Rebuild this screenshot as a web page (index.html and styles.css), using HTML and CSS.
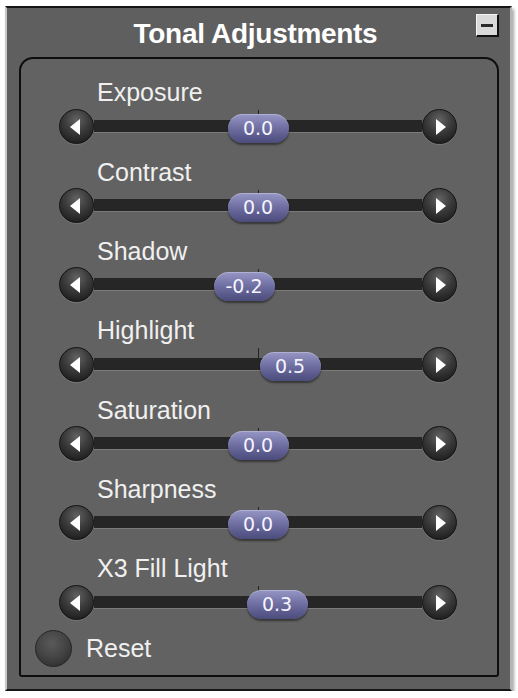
FILE: index.html
```html
<!DOCTYPE html>
<html>
<head>
<meta charset="utf-8">
<link rel="stylesheet" href="styles.css">
</head>
<body>
<div class="panel">
  <div class="titlebar">
    <div class="spacer"></div>
    <h1 class="title">Tonal Adjustments</h1>
    <button class="minimize" aria-label="Collapse"><span class="minus"></span></button>
  </div>
  <div class="inner">
    <div class="row">
      <div class="label">Exposure</div>
      <div class="slider">
        <span class="arrow-btn"><svg viewBox="0 0 35 35" width="35" height="35"><polygon points="11,18 21,10 21,26" fill="#fff"/></svg></span>
        <div class="track-wrap"><div class="track"></div><div class="tick"></div><div class="thumb" style="left:133.5px">0.0</div></div>
        <span class="arrow-btn"><svg viewBox="0 0 35 35" width="35" height="35"><polygon points="14,10 24,18 14,26" fill="#fff"/></svg></span>
      </div>
    </div>
    <div class="row">
      <div class="label">Contrast</div>
      <div class="slider">
        <span class="arrow-btn"><svg viewBox="0 0 35 35" width="35" height="35"><polygon points="11,18 21,10 21,26" fill="#fff"/></svg></span>
        <div class="track-wrap"><div class="track"></div><div class="tick"></div><div class="thumb" style="left:133.5px">0.0</div></div>
        <span class="arrow-btn"><svg viewBox="0 0 35 35" width="35" height="35"><polygon points="14,10 24,18 14,26" fill="#fff"/></svg></span>
      </div>
    </div>
    <div class="row">
      <div class="label">Shadow</div>
      <div class="slider">
        <span class="arrow-btn"><svg viewBox="0 0 35 35" width="35" height="35"><polygon points="11,18 21,10 21,26" fill="#fff"/></svg></span>
        <div class="track-wrap"><div class="track"></div><div class="tick"></div><div class="thumb" style="left:119.5px">-0.2</div></div>
        <span class="arrow-btn"><svg viewBox="0 0 35 35" width="35" height="35"><polygon points="14,10 24,18 14,26" fill="#fff"/></svg></span>
      </div>
    </div>
    <div class="row">
      <div class="label">Highlight</div>
      <div class="slider">
        <span class="arrow-btn"><svg viewBox="0 0 35 35" width="35" height="35"><polygon points="11,18 21,10 21,26" fill="#fff"/></svg></span>
        <div class="track-wrap"><div class="track"></div><div class="tick"></div><div class="thumb" style="left:165.5px">0.5</div></div>
        <span class="arrow-btn"><svg viewBox="0 0 35 35" width="35" height="35"><polygon points="14,10 24,18 14,26" fill="#fff"/></svg></span>
      </div>
    </div>
    <div class="row">
      <div class="label">Saturation</div>
      <div class="slider">
        <span class="arrow-btn"><svg viewBox="0 0 35 35" width="35" height="35"><polygon points="11,18 21,10 21,26" fill="#fff"/></svg></span>
        <div class="track-wrap"><div class="track"></div><div class="tick"></div><div class="thumb" style="left:133.5px">0.0</div></div>
        <span class="arrow-btn"><svg viewBox="0 0 35 35" width="35" height="35"><polygon points="14,10 24,18 14,26" fill="#fff"/></svg></span>
      </div>
    </div>
    <div class="row">
      <div class="label">Sharpness</div>
      <div class="slider">
        <span class="arrow-btn"><svg viewBox="0 0 35 35" width="35" height="35"><polygon points="11,18 21,10 21,26" fill="#fff"/></svg></span>
        <div class="track-wrap"><div class="track"></div><div class="tick"></div><div class="thumb" style="left:133.5px">0.0</div></div>
        <span class="arrow-btn"><svg viewBox="0 0 35 35" width="35" height="35"><polygon points="14,10 24,18 14,26" fill="#fff"/></svg></span>
      </div>
    </div>
    <div class="row">
      <div class="label">X3 Fill Light</div>
      <div class="slider">
        <span class="arrow-btn"><svg viewBox="0 0 35 35" width="35" height="35"><polygon points="11,18 21,10 21,26" fill="#fff"/></svg></span>
        <div class="track-wrap"><div class="track"></div><div class="tick"></div><div class="thumb" style="left:152.5px">0.3</div></div>
        <span class="arrow-btn"><svg viewBox="0 0 35 35" width="35" height="35"><polygon points="14,10 24,18 14,26" fill="#fff"/></svg></span>
      </div>
    </div>
    <div class="reset">
      <span class="reset-btn"></span>
      <span class="reset-label">Reset</span>
    </div>
  </div>
</div>
</body>
</html>
```

FILE: styles.css
```css
html, body {
  margin: 0;
  padding: 0;
  background: #ffffff;
}

body {
  font-family: "Liberation Sans", Arial, sans-serif;
}

.panel {
  box-sizing: border-box;
  width: 507px;
  height: 685px;
  margin: 6px 0 0 5px;
  padding: 0 11px 12px 12px;
  background: #5f5f5f;
  border-top: 2px solid #161616;
  border-left: 2px solid #c8c8c8;
  border-right: 2px solid #b4b4b4;
  border-bottom: 2px solid #161616;
  box-shadow: 2px 3px 3px rgba(0, 0, 0, 0.35);
  display: flex;
  flex-direction: column;
}

.titlebar {
  box-sizing: border-box;
  height: 49px;
  padding-top: 6px;
  display: grid;
  grid-template-columns: 1fr auto 1fr;
  align-items: start;
  flex: none;
}

.title {
  margin: 4px 7px 0 0;
  font-size: 28px;
  line-height: 32px;
  font-weight: bold;
  letter-spacing: -0.3px;
  color: #ffffff;
  white-space: nowrap;
}

.minimize {
  justify-self: end;
  box-sizing: border-box;
  width: 23px;
  height: 23px;
  padding: 0;
  background: #d9d9d9;
  border-top: 1px solid #f4f4f4;
  border-left: 1px solid #f4f4f4;
  border-right: 2px solid #111;
  border-bottom: 2px solid #111;
  display: flex;
  align-items: center;
  justify-content: center;
}

.minus {
  display: block;
  width: 12px;
  height: 3px;
  background: #2a2a2a;
}

.inner {
  box-sizing: border-box;
  height: 620px;
  flex: none;
  background: #626262;
  border: 2px solid #0e0e0e;
  border-radius: 14px 14px 3px 3px;
  padding-top: 19.3px;
  display: flex;
  flex-direction: column;
}

.row + .row {
  margin-top: 13.33px;
}

.label {
  padding-left: 76px;
  font-size: 25px;
  line-height: 28px;
  color: #f0f0f0;
}

.slider {
  margin: 2px 40px 0 38px;
  height: 36px;
  display: flex;
  align-items: center;
}

.arrow-btn {
  flex: none;
  box-sizing: border-box;
  width: 35px;
  height: 35px;
  border-radius: 50%;
  background: radial-gradient(circle at 50% 30%, #626262 0%, #3c3c3c 42%, #222 78%, #121212 100%);
  border: 1px solid #141414;
  box-shadow: 0 1px 1px rgba(255, 255, 255, 0.12);
  display: flex;
}

.arrow-btn svg {
  display: block;
  margin: -1px;
}

.track-wrap {
  flex: 1;
  height: 36px;
  position: relative;
  display: flex;
  align-items: center;
}

.track {
  width: 100%;
  height: 12px;
  background: #262626;
  border-bottom: 1px solid #7a7a7a;
}

.tick {
  position: absolute;
  left: 164px;
  top: 2px;
  width: 1px;
  height: 10px;
  background: #222;
}

.thumb {
  position: absolute;
  top: 5.5px;
  width: 61px;
  height: 29px;
  box-sizing: border-box;
  border-radius: 14.5px;
  background: linear-gradient(#9797c6 0%, #7575a8 40%, #5b5b8e 75%, #4c4c7c 100%);
  box-shadow: 0 2px 2px rgba(0, 0, 0, 0.45), inset 0 1px 0 rgba(255, 255, 255, 0.25);
  font-family: "DejaVu Sans", Verdana, sans-serif;
  font-size: 19px;
  line-height: 29px;
  text-align: center;
  color: #f4f4ff;
}

.reset {
  margin: 9.7px 0 0 14px;
  display: flex;
  align-items: center;
  gap: 14px;
}

.reset-btn {
  box-sizing: border-box;
  width: 37px;
  height: 37px;
  border-radius: 50%;
  background: radial-gradient(circle at 45% 35%, #5a5a5a 0%, #434343 50%, #2c2c2c 90%, #222 100%);
  border: 1px solid #262626;
}

.reset-label {
  font-size: 25px;
  line-height: 28px;
  color: #f0f0f0;
}
```
